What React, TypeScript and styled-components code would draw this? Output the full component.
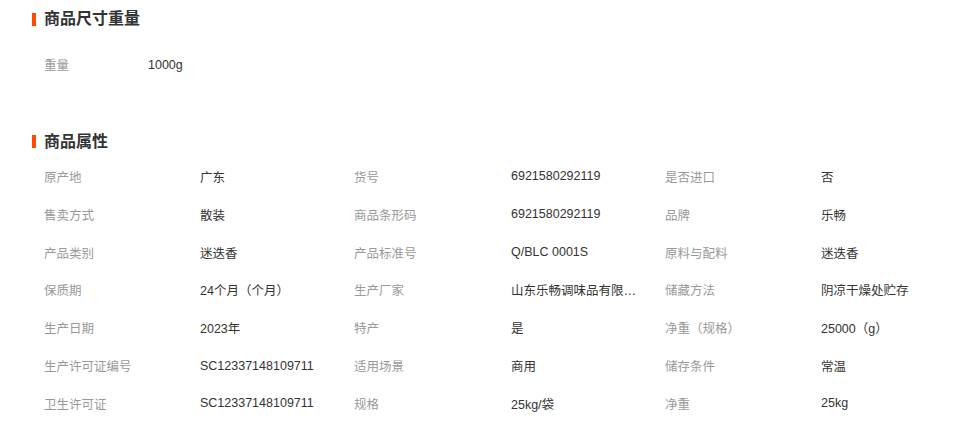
import React from "react";
import styled, { createGlobalStyle } from "styled-components";

const GlobalStyle = createGlobalStyle`
  html, body { margin: 0; padding: 0; background: #fff; }
  body {
    font-family: "Liberation Sans", "Noto Sans CJK SC", sans-serif;
    font-size: 12.5px;
    color: #333;
  }
`;

const Page = styled.div`
  width: 972px;
  height: 430px;
  overflow: hidden;
  padding-top: 9px;
  box-sizing: border-box;
`;

const Section = styled.section<{ $gap: number }>`
  display: flex;
  flex-direction: column;
  gap: ${(p) => p.$gap}px;
  padding-left: 32px;
`;

const Heading = styled.h2`
  margin: 0;
  display: flex;
  align-items: center;
  gap: 8px;
  height: 20px;
  font-size: 16px;
  line-height: 20px;
  font-weight: bold;
  color: #333;
  &::before {
    content: "";
    display: block;
    width: 4px;
    height: 13px;
    background: #ff4a00;
  }
`;

const SizeRow = styled.div`
  display: grid;
  grid-template-columns: 104px auto;
  align-items: center;
  height: 38px;
  padding-left: 12px;
`;

const Table = styled.div`
  display: grid;
  grid-template-columns: 156px 154px 157px 154px 156px 1fr;
  grid-auto-rows: 37.83px;
  align-items: center;
  padding-left: 12px;
`;

const Label = styled.span`
  color: #999;
  white-space: nowrap;
`;

const Value = styled.span`
  color: #333;
  white-space: nowrap;
  overflow: hidden;
  text-overflow: ellipsis;
  max-width: 130px;
`;

const Spacer = styled.div<{ $h: number }>`
  height: ${(p) => p.$h}px;
`;

const rows: [string, string][][] = [
  [["原产地", "广东"], ["货号", "6921580292119"], ["是否进口", "否"]],
  [["售卖方式", "散装"], ["商品条形码", "6921580292119"], ["品牌", "乐畅"]],
  [["产品类别", "迷迭香"], ["产品标准号", "Q/BLC 0001S"], ["原料与配料", "迷迭香"]],
  [["保质期", "24个月（个月）"], ["生产厂家", "山东乐畅调味品有限公司"], ["储藏方法", "阴凉干燥处贮存"]],
  [["生产日期", "2023年"], ["特产", "是"], ["净重（规格）", "25000（g）"]],
  [["生产许可证编号", "SC12337148109711"], ["适用场景", "商用"], ["储存条件", "常温"]],
  [["卫生许可证", "SC12337148109711"], ["规格", "25kg/袋"], ["净重", "25kg"]],
];

export default function App() {
  return (
    <>
      <GlobalStyle />
      <Page>
        <Section $gap={16.5}>
          <Heading>商品尺寸重量</Heading>
          <SizeRow>
            <Label>重量</Label>
            <Value>1000g</Value>
          </SizeRow>
        </Section>
        <Spacer $h={48} />
        <Section $gap={6}>
          <Heading>商品属性</Heading>
          <Table>
            {rows.map((row, i) =>
              row.map(([k, v], j) => (
                <React.Fragment key={`${i}-${j}`}>
                  <Label>{k}</Label>
                  <Value>{v}</Value>
                </React.Fragment>
              ))
            )}
          </Table>
        </Section>
      </Page>
    </>
  );
}
